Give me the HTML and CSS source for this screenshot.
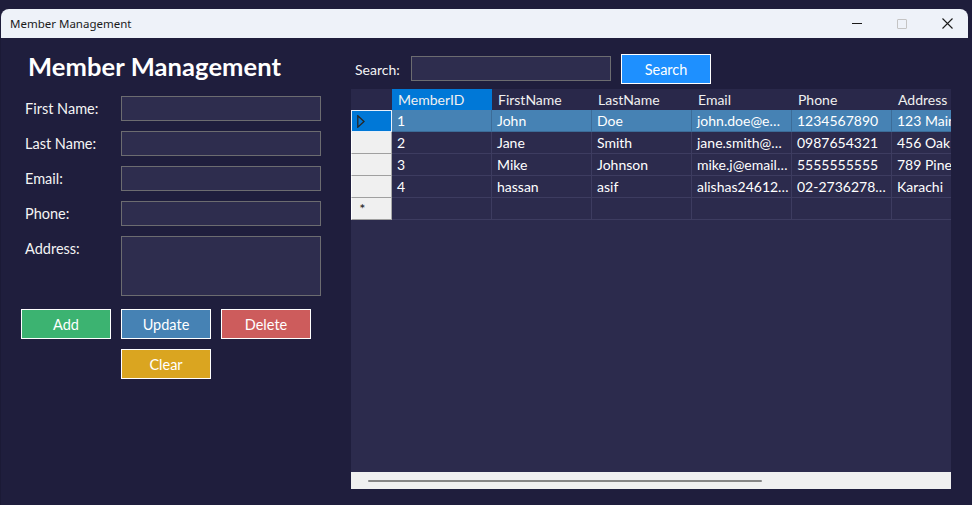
FILE: index.html
```html
<!DOCTYPE html>
<html lang="en">
<head>
<meta charset="utf-8">
<title>Member Management</title>
<link rel="stylesheet" href="styles.css">
</head>
<body>
<div class="window">
  <div class="titlebar">
    <span class="title">Member Management</span>
    <div class="controls">
      <span class="ctl ctl-min"></span>
      <span class="ctl ctl-max"></span>
      <svg class="ctl ctl-close" width="11" height="11" viewBox="0 0 11 11"><path d="M0.5 0.5 L10.5 10.5 M10.5 0.5 L0.5 10.5" stroke="#1a1a1a" stroke-width="1.1" fill="none"/></svg>
    </div>
  </div>
  <div class="content">
    <section class="left">
      <h1 class="heading">Member Management</h1>
      <div class="form">
        <label class="lbl">First Name:</label><div class="input"></div>
        <label class="lbl">Last Name:</label><div class="input"></div>
        <label class="lbl">Email:</label><div class="input"></div>
        <label class="lbl">Phone:</label><div class="input"></div>
        <label class="lbl">Address:</label><div class="input input-tall"></div>
      </div>
      <div class="buttons">
        <button class="btn btn-add">Add</button>
        <button class="btn btn-update">Update</button>
        <button class="btn btn-delete">Delete</button>
        <button class="btn btn-clear">Clear</button>
      </div>
    </section>
    <section class="right">
      <div class="searchbar">
        <span class="search-lbl">Search:</span>
        <div class="input search-input"></div>
        <button class="btn btn-search">Search</button>
      </div>
      <div class="grid">
        <div class="grid-body">
          <div class="row row-head">
            <div class="corner"></div>
            <div class="hcell hcell-active">MemberID</div>
            <div class="hcell">FirstName</div>
            <div class="hcell">LastName</div>
            <div class="hcell">Email</div>
            <div class="hcell">Phone</div>
            <div class="hcell">Address</div>
          </div>
          <div class="row row-selected">
            <div class="rh rh-current"><svg class="arrow" width="8" height="13" viewBox="0 0 8 13"><path d="M0.8 0.8 L7 6.5 L0.8 12.2 Z" fill="none" stroke="#262626" stroke-width="1.3"/></svg></div>
            <div class="cell">1</div>
            <div class="cell">John</div>
            <div class="cell">Doe</div>
            <div class="cell">john.doe@e…</div>
            <div class="cell">1234567890</div>
            <div class="cell">123 Main St</div>
          </div>
          <div class="row">
            <div class="rh"></div>
            <div class="cell">2</div>
            <div class="cell">Jane</div>
            <div class="cell">Smith</div>
            <div class="cell">jane.smith@…</div>
            <div class="cell">0987654321</div>
            <div class="cell">456 Oak Ave</div>
          </div>
          <div class="row">
            <div class="rh"></div>
            <div class="cell">3</div>
            <div class="cell">Mike</div>
            <div class="cell">Johnson</div>
            <div class="cell">mike.j@email…</div>
            <div class="cell">5555555555</div>
            <div class="cell">789 Pine Rd</div>
          </div>
          <div class="row">
            <div class="rh"></div>
            <div class="cell">4</div>
            <div class="cell">hassan</div>
            <div class="cell">asif</div>
            <div class="cell">alishas24612…</div>
            <div class="cell">02-2736278…</div>
            <div class="cell">Karachi</div>
          </div>
          <div class="row">
            <div class="rh rh-new"><span class="star">*</span></div>
            <div class="cell"></div>
            <div class="cell"></div>
            <div class="cell"></div>
            <div class="cell"></div>
            <div class="cell"></div>
            <div class="cell"></div>
          </div>
        </div>
        <div class="hscroll"><div class="thumb"></div></div>
      </div>
    </section>
  </div>
</div>
</body>
</html>
```

FILE: styles.css
```css
html, body {
  margin: 0;
  padding: 0;
  background: #1e1d3b;
}

.window {
  width: 972px;
  height: 505px;
  box-sizing: border-box;
  padding-top: 9px;
  display: flex;
  flex-direction: column;
  background: #1e1d3b;
  font-family: Lato, "Noto Sans", sans-serif;
  color: #f4f4f4;
  overflow: hidden;
}

/* title bar */
.titlebar {
  height: 29px;
  margin: 0 4px 0 1px;
  background: #eef2f9;
  border-radius: 8px 8px 0 0;
  display: flex;
  align-items: center;
  padding-left: 9px;
}
.title {
  font-family: "Noto Sans", "Open Sans", sans-serif;
  font-size: 11.5px;
  color: #1b1b1b;
}
.controls {
  margin-left: auto;
  display: flex;
  align-items: center;
  gap: 35px;
  padding-right: 15px;
}
.ctl {
  display: block;
  width: 10px;
  height: 10px;
  box-sizing: border-box;
}
.ctl-min {
  height: 1px;
  width: 10px;
  background: #1a1a1a;
}
.ctl-max {
  border: 1px solid #c4c4c4;
  border-radius: 1px;
}
.ctl-close {
  width: 11px;
  height: 11px;
}

/* content */
.content {
  flex: 1;
  display: flex;
  background: #1f1e3d;
  border-left: 1px solid #1b1a36;
}

.left {
  width: 330px;
  padding-left: 20px;
}
.heading {
  margin: 12px 0 0 7px;
  font-size: 25.5px;
  line-height: 32px;
  font-weight: 700;
  color: #ffffff;
  letter-spacing: 0.1px;
}

.form {
  margin: 14px 0 0 4px;
  display: grid;
  grid-template-columns: 96px 200px;
  row-gap: 10px;
}
.lbl {
  font-size: 14.5px;
  line-height: 25px;
  color: #f4f4f4;
}
.input {
  height: 25px;
  box-sizing: border-box;
  border: 1px solid #6c6c70;
  background: #2e2d4e;
}
.input-tall {
  height: 60px;
}

.buttons {
  margin-top: 13px;
  display: grid;
  grid-template-columns: repeat(3, 90px);
  gap: 10px;
}
.btn {
  height: 30px;
  width: 90px;
  box-sizing: border-box;
  border: 1px solid #ffffff;
  font-family: Lato, "Noto Sans", sans-serif;
  font-size: 14.5px;
  color: #ffffff;
  padding: 0;
  margin: 0;
}
.btn-add { background: #3cb371; }
.btn-update { background: #4682b4; }
.btn-delete { background: #cd5c5c; }
.btn-clear { background: #daa520; grid-column: 2; }
.btn-search { background: #1e90ff; margin-left: 10px; }

/* right */
.right {
  flex: 1;
  display: flex;
  flex-direction: column;
}
.searchbar {
  margin-top: 16px;
  height: 30px;
  display: flex;
  align-items: center;
  padding-left: 4px;
}
.search-lbl {
  width: 56px;
  font-size: 14px;
}
.search-input {
  width: 200px;
  margin-top: -1px;
}

.grid {
  margin-top: 5px;
  width: 600px;
  height: 400px;
  display: flex;
  flex-direction: column;
  background: #2c2b4d;
}
.grid-body {
  flex: 1;
  overflow: hidden;
}
.row {
  display: grid;
  grid-template-columns: 41px repeat(6, 100px);
  height: 22px;
  font-size: 14px;
  line-height: 21px;
}
.row-head {
  height: 21px;
  background: #29284a;
}
.corner {
  background: #29284a;
}
.hcell {
  padding-left: 6px;
  color: #f0f0f0;
  white-space: nowrap;
  overflow: hidden;
}
.hcell-active {
  background: #0078d7;
}
.cell {
  box-sizing: border-box;
  border-right: 1px solid #3d3c60;
  border-bottom: 1px solid #3d3c60;
  padding-left: 5px;
  color: #ffffff;
  white-space: nowrap;
  overflow: hidden;
}
.row-selected .cell {
  background: #4682b4;
  border-color: #3c6c98;
}
.rh {
  box-sizing: border-box;
  background: #f0f0f0;
  border-left: 1px solid #ffffff;
  border-right: 1px solid #a9a9a9;
  border-bottom: 1px solid #a0a0a0;
}
.rh-current {
  background: #0078d7;
  border: 1px solid #e8f0fa;
  display: flex;
  align-items: center;
  padding-left: 5px;
}
.rh-new {
  display: flex;
  align-items: center;
  padding-left: 8px;
}
.star {
  font-family: "DejaVu Sans", sans-serif;
  font-size: 9px;
  line-height: 9px;
  color: #333333;
  font-weight: 700;
}

.hscroll {
  height: 17px;
  background: #f0f0f0;
  display: flex;
  align-items: center;
  padding-left: 17px;
}
.thumb {
  width: 394px;
  height: 2px;
  background: #868686;
  border-radius: 1px;
}
```
